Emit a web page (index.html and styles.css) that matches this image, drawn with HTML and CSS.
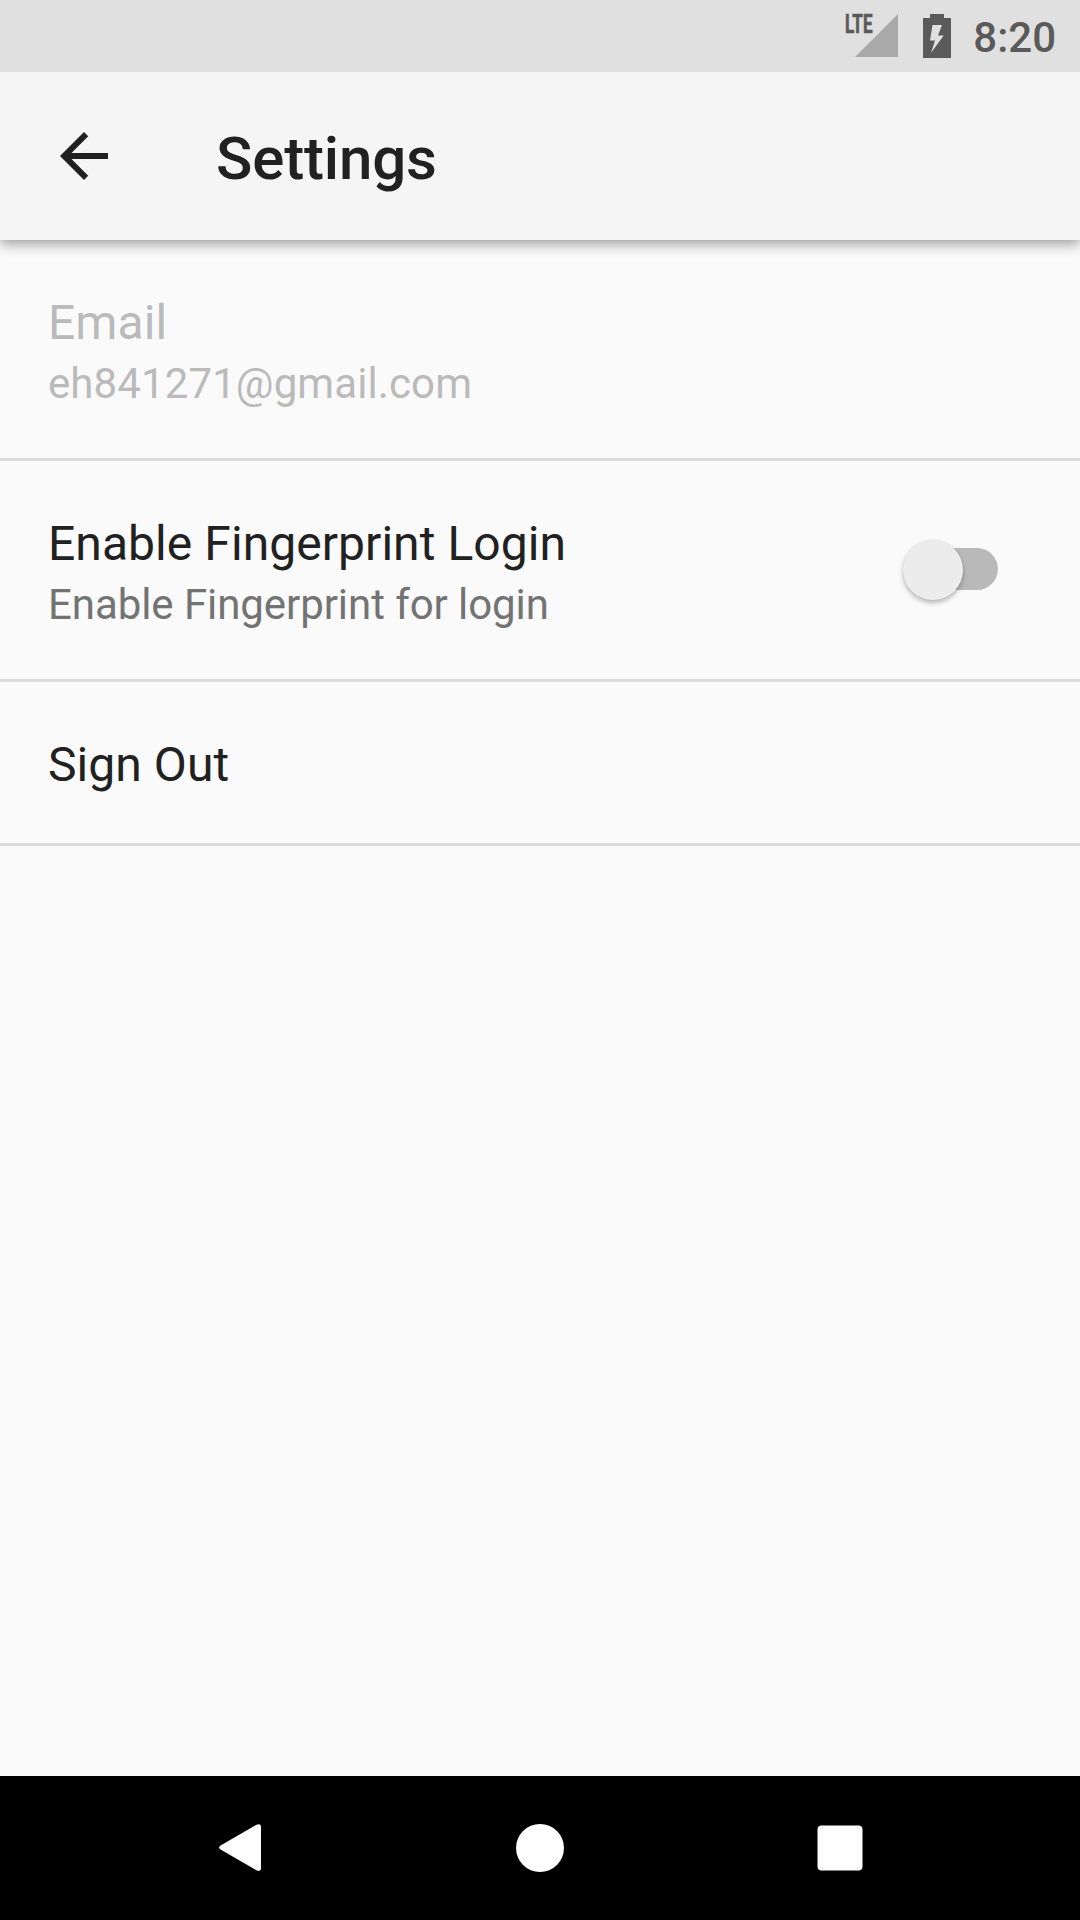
FILE: index.html
```html
<!DOCTYPE html>
<html lang="en">
<head>
<meta charset="utf-8">
<title>Settings</title>
<link rel="stylesheet" href="styles.css">
</head>
<body>
<div class="screen">
  <div class="status-bar">
    <svg class="signal" width="64" height="54" viewBox="-10 -10 64 54">
      <path class="signal-fill" d="M53 0V43H10Z"/>
      <text class="signal-label" x="0" y="19.300" textLength="27.500" lengthAdjust="spacingAndGlyphs">LTE</text>
    </svg>
    <svg class="battery" width="28" height="44" viewBox="0 0 28 44">
      <path fill-rule="evenodd" d="M7 0H21V4H28V44H0V4H7ZM9.500 11L7 26.500H12L8 39L20.700 21.500H15L19 11Z"/>
    </svg>
    <span class="clock">8:20</span>
  </div>
  <header class="toolbar">
    <svg class="back" width="72" height="72" viewBox="0 0 24 24"><path d="M20 11H7.830l5.590-5.590L12 4l-8 8 8 8 1.410-1.410L7.830 13H20v-2z"/></svg>
    <h1 class="title">Settings</h1>
  </header>
  <main class="list">
    <div class="row disabled">
      <div class="row-text">
        <div class="row-title">Email</div>
        <div class="row-summary email">eh841271@gmail.com</div>
      </div>
    </div>
    <div class="row">
      <div class="row-text">
        <div class="row-title">Enable Fingerprint Login</div>
        <div class="row-summary">Enable Fingerprint for login</div>
      </div>
      <div class="switch"><div class="thumb"></div></div>
    </div>
    <div class="row short">
      <div class="row-text">
        <div class="row-title">Sign Out</div>
      </div>
    </div>
  </main>
  <nav class="nav-bar">
    <svg width="60" height="60" viewBox="0 0 60 60"><path d="M46.500 6.700Q51 4.800 51 9.300V49.700Q51 54.200 46.500 52.300L11 31.800Q7.200 29.500 11 27.200Z"/></svg>
    <svg width="60" height="60" viewBox="0 0 60 60"><circle cx="30" cy="30" r="24"/></svg>
    <svg width="60" height="60" viewBox="0 0 60 60"><rect x="7.500" y="7.500" width="45" height="45" rx="4"/></svg>
  </nav>
</div>
</body>
</html>
```
FILE: styles.css
```css
* {
  box-sizing: border-box;
}

body {
  margin: 0;
  font-family: Roboto, "Noto Sans", sans-serif;
  color: #212121;
}

svg {
  display: block;
  flex: none;
}

.screen {
  width: 1080px;
  height: 1920px;
  display: flex;
  flex-direction: column;
  overflow: hidden;
  background: #fafafa;
}

.status-bar {
  position: relative;
  z-index: 1;
  flex: none;
  height: 72px;
  padding: 14px 24px 0 0;
  display: flex;
  justify-content: flex-end;
  background: #e0e0e0;
}

.signal {
  margin: -10px 24px 0 0;
}

.signal-fill {
  fill: #aaa;
}

.signal-label {
  fill: #5a5a5a;
  stroke: #5a5a5a;
  stroke-width: .7px;
  font-size: 26px;
  font-weight: 700;
}

.battery {
  margin-right: 22px;
  fill: #5a5a5a;
}

.clock {
  padding-top: 1px;
  font-size: 42px;
  font-weight: 500;
  line-height: 46px;
  color: #5a5a5a;
}

.toolbar {
  flex: none;
  height: 168px;
  padding-left: 48px;
  display: flex;
  align-items: center;
  background: #f5f5f5;
  box-shadow: 0 4px 12px rgba(0, 0, 0, .38);
}

.back {
  fill: #212121;
}

.title {
  margin: 6px 0 0 96px;
  font-size: 60px;
  font-weight: 500;
  line-height: 70px;
  letter-spacing: -.15px;
}

.list {
  flex: 1;
}

.row {
  height: 221px;
  padding: 55px 82px 0 48px;
  display: flex;
  justify-content: space-between;
  border-bottom: 3px solid #dbdbdb;
}

.short {
  height: 164px;
}

.row-title {
  font-size: 48px;
  line-height: 56px;
  letter-spacing: .06px;
}

.row-summary {
  margin-top: 8px;
  font-size: 42px;
  line-height: 50px;
  letter-spacing: -.07px;
  color: #737373;
}

.email {
  letter-spacing: .1px;
}

.disabled,
.disabled .row-summary {
  color: #bababa;
}

.switch {
  width: 84px;
  height: 42px;
  margin-top: 32px;
  border-radius: 21px;
  display: flex;
  align-items: center;
  background: #b9b9b9;
}

.thumb {
  flex: none;
  width: 60px;
  height: 60px;
  margin: 1px 0 0 -11px;
  border-radius: 50%;
  background: #ececec;
  box-shadow: 0 3px 5px rgba(0, 0, 0, .26), 0 0 2px rgba(0, 0, 0, .08);
}

.nav-bar {
  flex: none;
  height: 144px;
  display: flex;
  justify-content: center;
  align-items: center;
  gap: 240px;
  background: #000;
  fill: #fff;
}
```
